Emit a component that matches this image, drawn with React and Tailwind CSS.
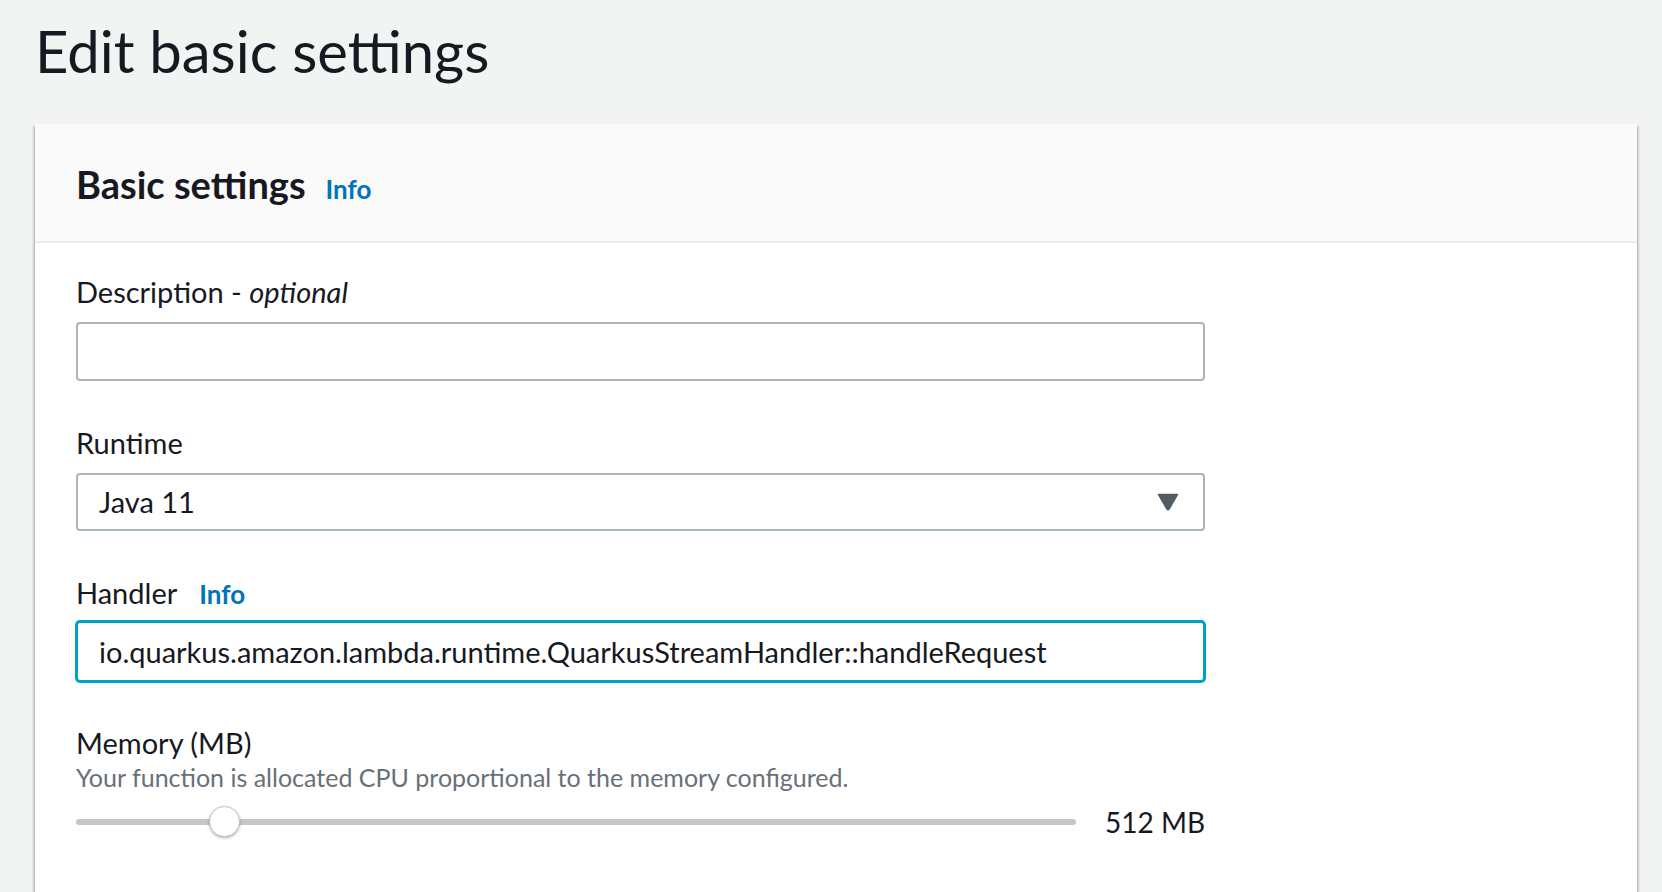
import React from 'react';

const FONT = { fontFamily: 'Lato, "Open Sans", sans-serif' };

// Etiqueta de campo com link Info opcional
function FieldLabel({ children, info }) {
  return (
    <div className="flex items-baseline gap-[22px] text-[29px] leading-[36px] text-[#16191f]">
      <span>{children}</span>
      {info && <span className="text-[26px] font-bold text-[#0073bb]">Info</span>}
    </div>
  );
}

export default function App() {
  return (
    <div style={FONT} className="h-screen overflow-hidden bg-[#f2f3f3] pl-[35px] pr-[25px] flex flex-col">
      <h1 className="pt-[15px] text-[58px] leading-[72px] text-[#16191f] font-normal">Edit basic settings</h1>

      <div className="mt-[37px] flex-1 bg-white shadow-[0_2px_2px_0_rgba(0,28,36,0.3),2px_2px_2px_0_rgba(0,28,36,0.15),-2px_2px_2px_0_rgba(0,28,36,0.15)]">
        {/* cabeçalho */}
        <div className="h-[119px] bg-[#fafafa] border-b-2 border-[#eaeded] px-[41px] pt-[39px]">
          <div className="flex items-baseline gap-[20px] leading-[42px]">
            <span className="text-[38px] font-bold text-[#16191f]">Basic settings</span>
            <span className="text-[26px] font-bold text-[#0073bb]">Info</span>
          </div>
        </div>

        {/* formulário */}
        <div className="px-[41px] pt-[31px] w-[1211px]">
          <FieldLabel>
            Description - <i>optional</i>
          </FieldLabel>
          <div className="mt-[12px] h-[59px] border-2 border-[#aab7b8] rounded-[4px] bg-white" />

          <div className="mt-[44px]">
            <FieldLabel>Runtime</FieldLabel>
          </div>
          <div className="mt-[12px] h-[58px] border-2 border-[#aab7b8] rounded-[4px] bg-white flex items-center justify-between pl-[21px] pr-[24px] text-[29px] leading-[36px] text-[#16191f]">
            <span>Java 11</span>
            <svg width="22" height="18" viewBox="0 0 22 18">
              <path d="M1.5 1.5 H20.5 L12.2 16 Q11 17.6 9.8 16 Z" fill="#545b64" stroke="#545b64" strokeWidth="1.5" strokeLinejoin="round" />
            </svg>
          </div>

          <div className="mt-[44px]">
            <FieldLabel info>Handler</FieldLabel>
          </div>
          <div className="mt-[9px] h-[61px] border-2 border-[#00a1c9] shadow-[0_0_0_1px_#00a1c9] rounded-[4px] bg-white flex items-center pl-[21px] text-[29px] leading-[36px] text-[#16191f]">
            io.quarkus.amazon.lambda.runtime.QuarkusStreamHandler::handleRequest
          </div>

          <div className="mt-[44px] text-[29px] leading-[33px] text-[#16191f]">Memory (MB)</div>
          <div className="mt-[2px] text-[25px] leading-[33px] text-[#687078]">
            Your function is allocated CPU proportional to the memory configured.
          </div>

          {/* slider de memória */}
          <div className="mt-[10px] flex items-center gap-[29px]">
            <div className="relative flex-1 h-[32px] flex items-center">
              <div className="w-full h-[6px] rounded-full bg-[#c6c6c6]" />
              <div className="absolute left-[133px] top-[0px] w-[31px] h-[31px] rounded-full bg-white border border-[#c6c6c6] shadow-[0_1px_3px_rgba(0,0,0,0.3)]" />
            </div>
            <span className="text-[28px] leading-[36px] text-[#16191f]">512 MB</span>
          </div>
        </div>
      </div>
    </div>
  );
}
